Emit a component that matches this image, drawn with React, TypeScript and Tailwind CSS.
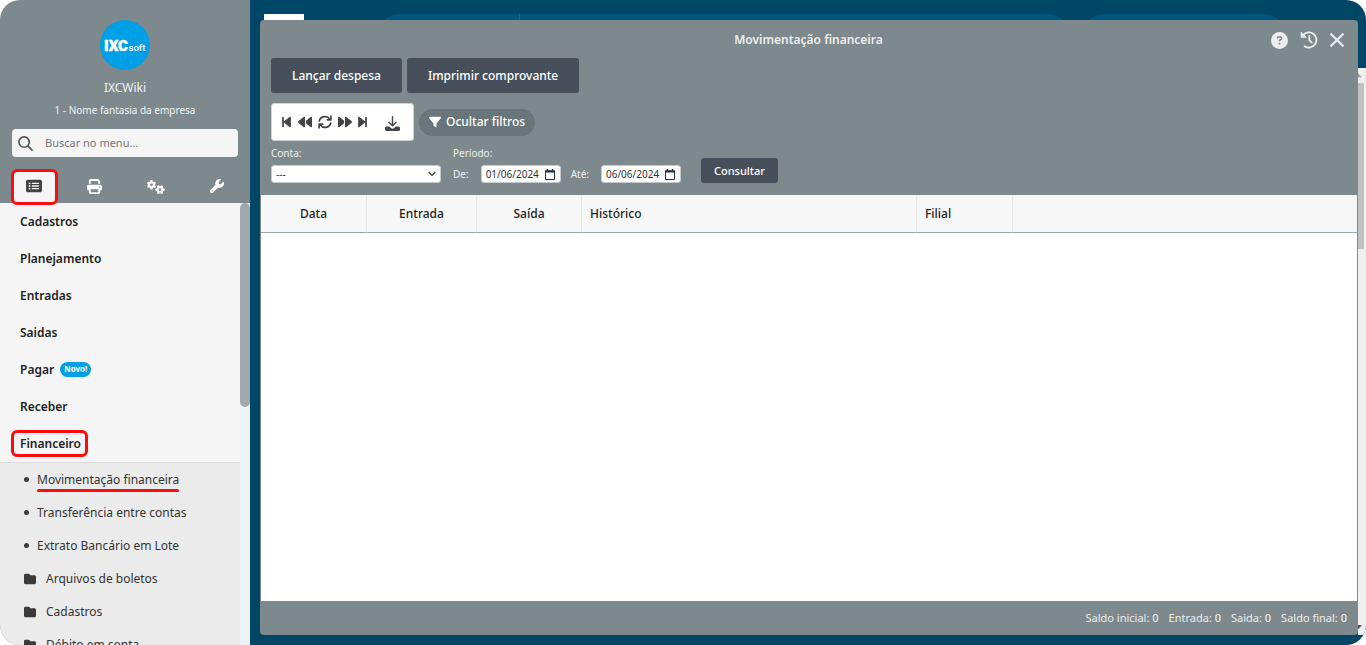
import React from "react";
import {
  FaRectangleList,
  FaPrint,
  FaGears,
  FaWrench,
  FaFolder,
  FaFilter,
  FaBackwardStep,
  FaForwardStep,
  FaBackward,
  FaForward,
  FaCircleQuestion,
} from "react-icons/fa6";

const sections = ["Cadastros", "Planejamento", "Entradas", "Saidas", "Pagar", "Receber", "Financeiro"];
const pages = ["Movimentação financeira", "Transferência entre contas", "Extrato Bancário em Lote"];
const folders = ["Arquivos de boletos", "Cadastros", "Débito em conta"];

function Logo() {
  return (
    <svg viewBox="0 0 50 50" className="size-[50px]" role="img" aria-label="IXCsoft">
      <circle cx="25" cy="25" r="25" fill="#009fe6" />
      <text x="4" y="30.500" fontFamily="Roboto, sans-serif" fontWeight="900" fontSize="15" fill="#fff" stroke="#fff" strokeWidth="0.500">
        IXC
      </text>
      <text x="28.500" y="30.500" fontFamily="Roboto, sans-serif" fontWeight="500" fontSize="9.500" fill="#fff">
        soft
      </text>
    </svg>
  );
}

function SearchIcon() {
  return (
    <svg viewBox="0 0 16 16" className="size-[15px]" fill="none" stroke="#555" strokeWidth="1.800" strokeLinecap="round">
      <circle cx="6.500" cy="6.500" r="5.500" />
      <path d="M10.500 10.500 15 15" />
    </svg>
  );
}

function RefreshIcon() {
  return (
    <svg viewBox="0 0 14 14" className="size-[14px]" fill="none" stroke="currentColor" strokeWidth="1.700" strokeLinecap="round" strokeLinejoin="round">
      <path d="M1.300 6A5.800 5.800 0 0 1 11.800 4.200M12.900 1.200v3.600H9.300" />
      <path d="M12.700 8A5.800 5.800 0 0 1 2.200 9.800M1.100 12.800V9.200h3.600" />
    </svg>
  );
}

function DownloadIcon() {
  return (
    <svg viewBox="0 0 15 15" className="size-[15px]" fill="none" stroke="currentColor" strokeWidth="1.400" strokeLinecap="round" strokeLinejoin="round">
      <path d="M7.500.8v8.600M3.900 6.200l3.600 3.600 3.600-3.600" />
      <path fill="currentColor" stroke="none" d="M1.500 10.500h2.800l1.900 1.700c.8.600 1.800.6 2.600 0l1.900-1.700h2.800c.8 0 1.500.7 1.500 1.500v1.500c0 .8-.7 1.500-1.500 1.500h-12C.7 15 0 14.300 0 13.500V12c0-.8.7-1.500 1.500-1.500z" />
    </svg>
  );
}

function HistoryIcon() {
  return (
    <svg viewBox="0 0 18 18" className="size-[18px]" fill="none" stroke="currentColor" strokeWidth="1.800" strokeLinecap="round" strokeLinejoin="round">
      <path d="M2.800 4.500A7.600 7.600 0 1 1 4.600 15.200" />
      <path d="M9.300 5v4.300l2.600 2.300" />
      <path d="M1.200 1.600v4.600h4.600z" fill="currentColor" strokeWidth="1" />
    </svg>
  );
}

function CloseIcon() {
  return (
    <svg viewBox="0 0 14 14" className="size-[14px]" fill="none" stroke="currentColor" strokeWidth="2.200" strokeLinecap="round">
      <path d="M1.200 1.200l11.600 11.600M12.800 1.200 1.200 12.800" />
    </svg>
  );
}

function CalendarIcon() {
  return (
    <svg viewBox="0 0 10 11" className="h-[11px] w-[10px]" fill="none" stroke="#1f2d4d">
      <path d="M.5 2h9v8.500h-9z" />
      <path d="M0 2.500h10" strokeWidth="2" />
      <path d="M2.500 0v2M7.500 0v2" strokeWidth="1.400" />
    </svg>
  );
}

function DateField({ id, label, value }: { id: string; label: string; value: string }) {
  return (
    <div className="flex items-center">
      <label htmlFor={id} className="text-[10px] text-[#eef0f0]">{label}</label>
      <span className="ml-3 flex h-[18px] w-20 items-center justify-between rounded-[3px] border border-[#c3c9cc] bg-white pr-[5px] pl-1">
        <input id={id} defaultValue={value} className="w-[58px] bg-transparent text-[10px] text-[#333] outline-none" />
        <button type="button" aria-label="Abrir calendário">
          <CalendarIcon />
        </button>
      </span>
    </div>
  );
}

function Sidebar() {
  return (
    <aside className="flex w-[250px] shrink-0 flex-col overflow-hidden bg-[#7d898d]">
      <header className="flex flex-col items-center pt-5 text-[#f1f3f3]">
        <Logo />
        <p className="mt-[9px] text-xs leading-[18px]">IXCWiki</p>
        <p className="mt-[5px] text-[10px] leading-4">1 - Nome fantasia da empresa</p>
      </header>
      <div className="mx-3 mt-[11px] flex h-7 shrink-0 items-center gap-3 rounded bg-[#f5f5f5] pr-[7px] pl-[6px]">
        <SearchIcon />
        <input aria-label="Buscar no menu" placeholder="Buscar no menu..." className="min-w-0 flex-1 bg-transparent text-[11px] text-[#333] outline-none placeholder:text-[#757575]" />
      </div>
      <nav aria-label="Áreas" className="mt-3 grid h-[34px] shrink-0 grid-cols-[70px_1fr_1fr_1fr] text-white">
        <button type="button" aria-label="Menu" className="relative z-10 ml-[11px] flex h-9 w-[47px] items-center justify-center rounded-md border-3 border-[#fb0d0d] bg-[#f5f5f5] pr-px pb-[2px] text-[#444]">
          <FaRectangleList className="size-4" />
        </button>
        <button type="button" aria-label="Relatórios" className="flex items-center justify-center pr-3 pb-px"><FaPrint className="size-[15px]" /></button>
        <button type="button" aria-label="Configurações" className="flex items-center justify-center pr-2 pb-px"><FaGears className="size-[18px]" /></button>
        <button type="button" aria-label="Ferramentas" className="flex items-center justify-center pr-[6px] pb-[2px]"><FaWrench className="size-[14px]" /></button>
      </nav>
      <div className="flex min-h-0 flex-1 overflow-hidden">
        <div className="flex-1 bg-[#ebebeb]">
          <ul className="border-b border-[#dcdcdc] bg-[#f5f5f5] text-xs font-semibold text-[#222]">
            {sections.map((name) => (
              <li key={name} className="flex h-[37px] items-center">
                {name === "Financeiro" ? (
                  <a href="#financeiro" className="ml-[11px] flex h-[27px] items-center rounded-md border-3 border-[#fb0d0d] pr-1 pl-[6px]">{name}</a>
                ) : (
                  <a href="#secao" className="ml-5">{name}</a>
                )}
                {name === "Pagar" && (
                  <span className="ml-[6px] flex h-[15px] items-center rounded-full bg-[#009fe6] px-1 text-[8px] font-bold text-white">Novo!</span>
                )}
              </li>
            ))}
          </ul>
          <ul className="text-xs text-[#333]">
            {pages.map((name, i) => (
              <li key={name} className="flex h-[33px] items-center pl-6">
                <span className="size-[5px] rounded-full bg-[#3b3b3b]" />
                <a href="#pagina" className={i === 0 ? "relative ml-2 after:absolute after:inset-x-0 after:top-[17px] after:h-[3px] after:rounded-full after:bg-[#fb0d0d]" : "ml-2"}>{name}</a>
              </li>
            ))}
            {folders.map((name) => (
              <li key={name} className="flex h-[33px] items-center gap-[10px] pl-6">
                <FaFolder className="size-3 text-[#3b3b3b]" />
                <a href="#pasta">{name}</a>
              </li>
            ))}
          </ul>
        </div>
        <div className="w-[10px] bg-[#ebf3f6]">
          <div className="h-[204px] rounded-full bg-[#a0a9ad]" />
        </div>
      </div>
    </aside>
  );
}

function Backdrop() {
  return (
    <div className="absolute inset-0" aria-hidden="true">
      <div className="flex h-[68px] items-start pt-[14px] pr-[82px] pl-[14px]">
        <div className="h-10 w-10 bg-white" />
        <div className="ml-[75px] flex h-10 flex-1 rounded-full bg-[#015680]">
          <div className="w-[141px] border-r border-[#1b6488]" />
        </div>
        <div className="ml-4 h-10 w-[200px] rounded-full bg-[#015680]" />
      </div>
      <div className="ml-auto h-[567px] w-2 overflow-hidden bg-[#f0f0f0]">
        <svg viewBox="0 0 8 15" className="h-[15px] w-2"><path d="M0 5 4 9.500H0z" fill="#a3a3a3" /></svg>
        <div className="h-[166px] w-[6px] bg-[#c1c1c1]" />
        <svg viewBox="0 0 8 386" className="h-[386px] w-2"><path d="M0 376h4L0 380.500z" fill="#505050" /></svg>
      </div>
    </div>
  );
}

function Toolbar() {
  return (
    <div className="flex h-[38px] w-[143px] items-center rounded-[3px] border border-[#cdd1d3] bg-white pl-[7px] text-[#444]">
      <button type="button" aria-label="Primeiro" className="flex w-[15px] justify-center"><FaBackwardStep className="h-[14px] w-[11px]" /></button>
      <button type="button" aria-label="Anterior" className="ml-px flex w-5 justify-center"><FaBackward className="size-[14px]" /></button>
      <button type="button" aria-label="Atualizar" className="flex w-5 justify-center"><RefreshIcon /></button>
      <button type="button" aria-label="Próximo" className="flex w-5 justify-center"><FaForward className="size-[14px]" /></button>
      <button type="button" aria-label="Último" className="flex w-[15px] justify-center"><FaForwardStep className="h-[14px] w-[11px]" /></button>
      <button type="button" aria-label="Exportar" className="ml-3 flex w-5 justify-center pt-[2px]"><DownloadIcon /></button>
    </div>
  );
}

export default function App() {
  return (
    <div className="h-screen bg-white font-['Noto_Sans',sans-serif]">
      <div className="flex h-full overflow-hidden rounded-[20px]">
        <Sidebar />
        <main className="relative flex min-w-0 flex-1 bg-[#004767] pt-5 pr-2 pb-[10px] pl-[10px]">
          <Backdrop />
          <section className="relative flex min-w-0 flex-1 flex-col rounded bg-[#7d898d]">
            <header className="flex h-[38px] items-center text-[#eceeee]">
              <h1 className="flex-1 pt-px pl-[86px] text-center text-xs font-semibold">Movimentação financeira</h1>
              <div className="flex items-center gap-3 pt-[2px] pr-[14px]">
                <button type="button" aria-label="Ajuda"><FaCircleQuestion className="size-[17px]" /></button>
                <button type="button" aria-label="Histórico"><HistoryIcon /></button>
                <button type="button" aria-label="Fechar"><CloseIcon /></button>
              </div>
            </header>
            <div className="flex gap-[5px] pl-[11px] text-xs font-medium text-white">
              <button type="button" className="h-[35px] rounded-[3px] bg-[#47505a] px-[21px]">Lançar despesa</button>
              <button type="button" className="h-[35px] rounded-[3px] bg-[#47505a] px-[21px]">Imprimir comprovante</button>
            </div>
            <div className="mt-[10px] flex items-center gap-[5px] pl-[11px]">
              <Toolbar />
              <button type="button" className="flex h-[27px] items-center gap-[5px] rounded-full bg-[#68757a] px-[10px] text-xs font-medium text-white">
                <FaFilter className="size-3" />
                Ocultar filtros
              </button>
            </div>
            <form className="flex h-[54px] items-start pt-1 pl-[11px]" onSubmit={(e) => e.preventDefault()}>
              <div className="w-[170px]">
                <label htmlFor="conta" className="block text-[10px] leading-4 text-[#eef0f0]">Conta:</label>
                <div className="relative mt-1">
                  <select id="conta" className="block h-[18px] w-full appearance-none rounded-[3px] border border-[#c3c9cc] bg-white pl-1 text-[10px] leading-4 text-[#333]">
                    <option>---</option>
                  </select>
                  <svg viewBox="0 0 8 6" className="pointer-events-none absolute top-[6px] right-[5px] h-[6px] w-2" fill="none" stroke="#333" strokeWidth="1.200"><path d="m.7 1 3.300 3.300L7.300 1" /></svg>
                </div>
              </div>
              <fieldset className="ml-3">
                <legend className="text-[10px] leading-4 text-[#eef0f0]">Período:</legend>
                <div className="mt-1 flex items-center gap-[10px]">
                  <DateField id="de" label="De:" value="01/06/2024" />
                  <DateField id="ate" label="Até:" value="06/06/2024" />
                </div>
              </fieldset>
              <button type="submit" className="mt-[13px] -mb-2 ml-5 h-[25px] rounded-[3px] bg-[#47505a] px-[13px] text-[11px] leading-4 font-medium text-white">Consultar</button>
            </form>
            <div className="mx-px min-h-0 flex-1 bg-white">
              <table className="w-full table-fixed border-separate border-spacing-0 text-xs text-[#222]">
                <colgroup>
                  <col className="w-[106px]" />
                  <col className="w-[110px]" />
                  <col className="w-[105px]" />
                  <col className="w-[335px]" />
                  <col className="w-24" />
                  <col />
                </colgroup>
                <thead>
                  <tr className="h-[38px] bg-[#f7f7f7]">
                    <th className="border-r border-b border-r-[#e8e8e8] border-b-[#9aa5ae] p-0 font-medium">Data</th>
                    <th className="border-r border-b border-r-[#e8e8e8] border-b-[#9aa5ae] p-0 font-medium">Entrada</th>
                    <th className="border-r border-b border-r-[#e8e8e8] border-b-[#9aa5ae] p-0 font-medium">Saída</th>
                    <th className="border-r border-b border-r-[#e8e8e8] border-b-[#9aa5ae] p-0 pl-2 text-left font-medium">Histórico</th>
                    <th className="border-r border-b border-r-[#e8e8e8] border-b-[#9aa5ae] p-0 pl-2 text-left font-medium">Filial</th>
                    <td className="border-b border-b-[#9aa5ae]" />
                  </tr>
                </thead>
                <tbody />
              </table>
            </div>
            <footer className="flex h-[34px] items-center justify-end gap-[10px] pt-px pr-[11px] text-[11px] text-[#eceeee]">
              {["Saldo inicial:", "Entrada:", "Saida:", "Saldo final:"].map((label) => (
                <span key={label}>{label} <b className="font-medium">0</b></span>
              ))}
            </footer>
          </section>
        </main>
      </div>
    </div>
  );
}
